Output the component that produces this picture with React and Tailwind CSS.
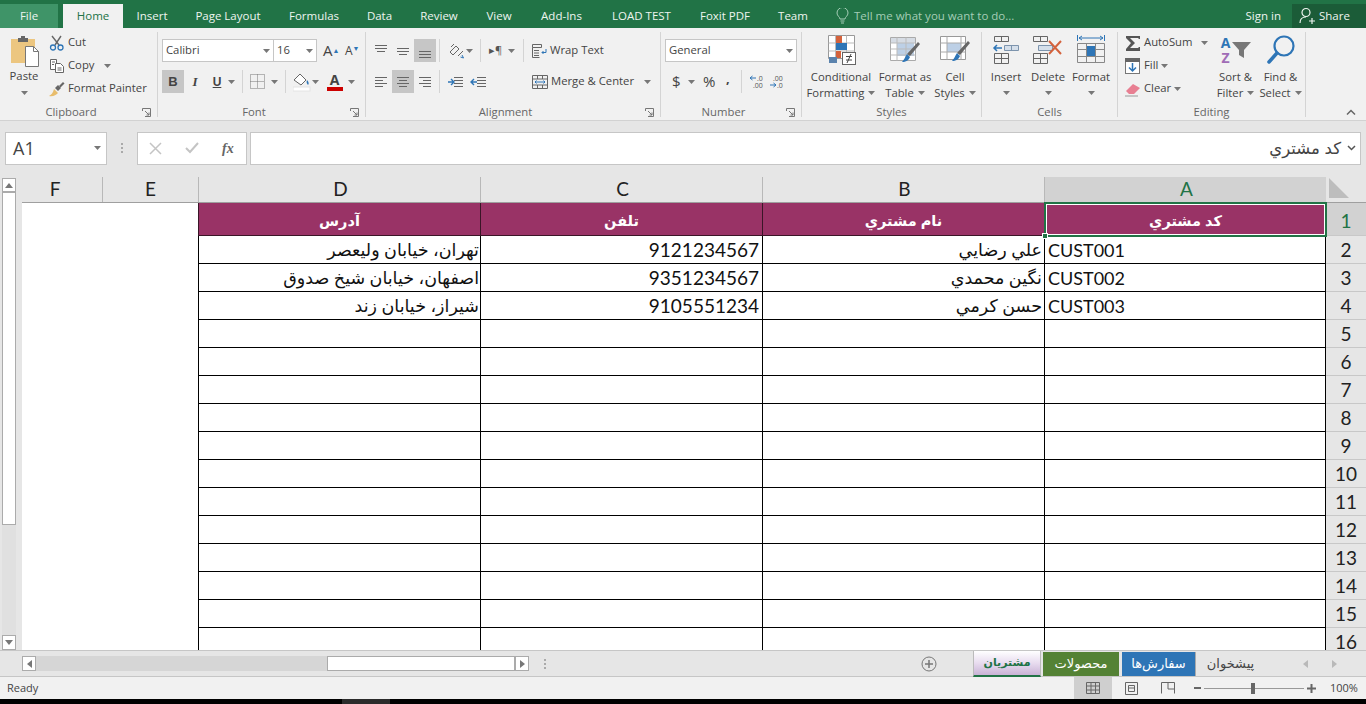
const Caret = ({ className = "" }) => (
    <svg className={`shrink-0 ${className}`} width="7" height="4" viewBox="0 0 7 4"><path d="M0 0h7L3.5 4z" fill="#777" /></svg>
)

const Sep = ({ className = "" }) => <div className={`w-px h-[23px] bg-[#d4d4d4] shrink-0 ${className}`} />

const Launcher = () => (
    <svg width="9" height="9" viewBox="0 0 9 9" fill="none" stroke="#777"><path d="M.5 3V.5h8v8H3" /><path d="M3 3l4 4M7 4.500V7H4.500" /></svg>
)

const Group = ({ label, launcher, className, children }) => (
    <div className={`h-[85px] mt-1 border-r border-[#d4d4d4] shrink-0 flex flex-col ${className}`}>
        <div className="flex-1 min-h-0">{children}</div>
        <div className="h-[18px] translate-y-[4px] flex items-center text-[#666]">
            <span className="flex-1 text-center">{label}</span>
            {launcher && <span className="flex mr-[6px]"><Launcher /></span>}
        </div>
    </div>
)

const PasteIcon = () => (
    <svg width="30" height="32" viewBox="0 0 30 32">
        <rect x="1" y="4" width="24" height="24" fill="#ecc680" />
        <path d="M8 3h3V1h4v2h3v4H8z" fill="#666" />
        <path d="M15.500 11.500h8l5 5v15h-13z" fill="#fff" stroke="#777" />
        <path d="M23.500 11.500v5h5" fill="none" stroke="#777" />
    </svg>
)

const CutIcon = () => (
    <svg width="16" height="16" viewBox="0 0 16 16" fill="none">
        <path d="M3 1l7 9M12 1L6 10" stroke="#666" strokeWidth="1.400" />
        <circle cx="4" cy="12.500" r="2.500" stroke="#2e75b6" strokeWidth="1.300" />
        <circle cx="11.500" cy="12.500" r="2.500" stroke="#2e75b6" strokeWidth="1.300" />
    </svg>
)

const CopyIcon = () => (
    <svg width="16" height="16" viewBox="0 0 16 16" fill="#fff" stroke="#666">
        <path d="M1.500 1.500h6v10h-6z" />
        <path d="M6.500 5.500h5l3 3v6h-8z" />
        <path d="M3 4h3M3 6.500h2M8.500 10h4M8.500 12h4" fill="none" />
    </svg>
)

const PainterIcon = () => (
    <svg width="16" height="16" viewBox="0 0 16 16">
        <path d="M0 15c2-1 4-3 5-7l4 4c-2 2-5 4-9 3z" fill="#e8bd6c" />
        <path d="M6 7l3-3 3 3-3 3z" fill="#666" />
        <path d="M10 5l4-4 1.500 1.500-4 4z" fill="#666" />
    </svg>
)

const Lines = ({ rows }) => (
    <svg width="16" height="16" viewBox="0 0 16 16" stroke="#666" fill="none">
        {rows.map((r, i) => <path key={i} d={`M${r[0]} ${r[2]}.500H${r[1]}`} />)}
    </svg>
)

const FillIcon = () => (
    <svg width="18" height="20" viewBox="0 0 18 20" fill="none">
        <path d="M1 8l6-6 6 6-5 5z" fill="#fff" stroke="#666" />
        <path d="M14 8c2 2 2 4 1 5-1-1-2-3-1-5z" fill="#2e75b6" />
        <rect x="0" y="15" width="17" height="4" fill="#fff" stroke="#e4e4e4" />
    </svg>
)

const AlignBtn = ({ rows, on }) => (
    <div className={`w-[22px] h-[23px] flex items-center justify-center ${on ? "bg-[#c6c6c6]" : ""}`}><Lines rows={rows} /></div>
)

const WrapIcon = () => (
    <svg width="16" height="16" viewBox="0 0 16 16" fill="none" stroke="#666">
        <path d="M1.500 1.500h9v3h-9zM1.500 4.500v10h7M3 7.500h5M3 10h5M3 12.500h5" />
        <path d="M15 6v3.500h-4M12.500 8L11 9.500l1.500 1.500" stroke="#2e75b6" />
    </svg>
)

const MergeIcon = () => (
    <svg width="16" height="16" viewBox="0 0 16 16" fill="none" stroke="#666">
        <path d="M.5 1.500h15v13H.5zM.5 5h15M.5 11h15M5.500 1.500V5M10.500 1.500V5M5.500 11v3.500M10.500 11v3.500" />
        <path d="M3 8h10M4.500 6.500L3 8l1.500 1.500M11.500 6.500L13 8l-1.500 1.500" stroke="#2e75b6" />
    </svg>
)

const CondIcon = () => (
    <svg width="32" height="32" viewBox="0 0 32 32">
        <path d="M3.500 1.500h26v23h-26z" fill="#fff" stroke="#999" />
        <path d="M3.500 9h26M3.500 17h26M10.500 1.500v23M21.500 1.500v23" stroke="#bbb" fill="none" />
        <rect x="11" y="2" width="6" height="7" fill="#d4623c" />
        <rect x="11" y="9" width="11" height="7" fill="#2e75b6" />
        <rect x="11" y="17" width="5" height="7" fill="#d4623c" />
        <rect x="4" y="23" width="8" height="6" fill="#5b83ad" />
        <rect x="17.500" y="18.500" width="13" height="12" fill="#fff" stroke="#666" />
        <path d="M21 22.500h6M21 26h6M22 29l4-9" stroke="#444" fill="none" />
    </svg>
)

const TableIcon = () => (
    <svg width="32" height="32" viewBox="0 0 32 32">
        <path d="M1.500 3.500h25v23h-25z" fill="#fff" stroke="#aaa" />
        <rect x="2" y="4" width="24" height="5" fill="#d6dce4" />
        <rect x="8" y="9" width="17" height="13" fill="#bdd0e6" />
        <path d="M1.500 9h25M1.500 15h25M1.500 21h25M8 3.500v23M17 3.500v23" stroke="#bbb" fill="none" />
        <path d="M29 8l2 2-10 12-3-2z" fill="#666" />
        <path d="M18 20l3 3c-1 3-4 5-8 5 2-2 3-5 5-8z" fill="#2e75b6" />
    </svg>
)

const CellStyleIcon = () => (
    <svg width="32" height="32" viewBox="0 0 32 32">
        <path d="M1.500 2.500h25v23h-25z" fill="#fff" stroke="#999" />
        <rect x="8" y="9" width="14" height="9" fill="#bdd0e6" />
        <path d="M8 2.500v23M22 2.500v23M1.500 9h25M1.500 18h25" stroke="#aaa" fill="none" />
        <path d="M29 7l2 2-10 12-3-2z" fill="#666" />
        <path d="M18 19l3 3c-1 3-4 5-8 5 2-2 3-5 5-8z" fill="#2e75b6" />
    </svg>
)

const InsertIcon = () => (
    <svg width="28" height="30" viewBox="0 0 28 30" fill="none" stroke="#666">
        <path d="M2.500 1.500h14v5h-14zM9.500 1.500v5M2.500 18.500h14v10h-14zM2.500 23.500h14M9.500 18.500v10" />
        <path d="M12.500 10.500h14v5h-14zM19.500 10.500v5" stroke="#7d94ad" fill="#d5dfea" />
        <path d="M10 13H2M5 10l-3 3 3 3" stroke="#2e75b6" strokeWidth="1.500" />
    </svg>
)

const DeleteIcon = () => (
    <svg width="32" height="30" viewBox="0 0 32 30" fill="none" stroke="#666">
        <path d="M1.500 1.500h14v5h-14zM8.500 1.500v5M1.500 18.500h14v10h-14zM1.500 23.500h14M8.500 18.500v10" />
        <path d="M6.500 10.500h14v5h-14z" stroke="#7d94ad" fill="#d5dfea" />
        <path d="M17 6l12 13M29 6L17 19" stroke="#d4623c" strokeWidth="2" />
    </svg>
)

const FormatIcon = () => (
    <svg width="30" height="32" viewBox="0 0 30 32" fill="none" stroke="#666">
        <path d="M1.500 1v6M28.500 1v6M3 4h24M3 4l3-2M3 4l3 2M27 4l-3-2M27 4l-3 2" stroke="#2e75b6" />
        <path d="M1.500 9.500h27v19h-27zM1.500 15.500h27M1.500 22.500h27M10.500 9.500v19M19.500 9.500v19" stroke="#888" />
        <rect x="11" y="12" width="8" height="10" fill="#2e75b6" stroke="none" />
    </svg>
)

const SumIcon = () => (
    <svg width="16" height="16" viewBox="0 0 16 16"><path d="M1 1h14v3h-1l-1-1H5l5 5-5 5h8l1-1h1v4H1v-2l5-6-5-5z" fill="#555" /></svg>
)

const FillDownIcon = () => (
    <svg width="16" height="16" viewBox="0 0 16 16">
        <rect x=".5" y=".5" width="14" height="15" fill="#fff" stroke="#777" />
        <rect x="0" y="0" width="15" height="4" fill="#666" />
        <path d="M7.500 5v8M4 9.500l3.500 3.500L11 9.500" fill="none" stroke="#2e75b6" strokeWidth="1.500" />
    </svg>
)

const EraserIcon = () => (
    <svg width="16" height="16" viewBox="0 0 16 16">
        <path d="M1 10l7-7 7 4-6 6H4z" fill="#e87f92" />
        <path d="M0 15h13" stroke="#999" strokeWidth="1" />
    </svg>
)

const SortIcon = () => (
    <div className="flex items-center h-[32px]">
        <div className="w-[12px] flex flex-col items-center font-bold text-[14px]">
            <span className="h-[15px] leading-[15px] text-[#2e75b6]">A</span>
            <span className="h-[15px] leading-[15px] text-[#a06cb6]">Z</span>
        </div>
        <svg width="20" height="18" viewBox="0 0 20 18"><path d="M0 1h19l-7 8v8l-5-3V9z" fill="#777" /></svg>
    </div>
)

const FindIcon = () => (
    <svg width="30" height="30" viewBox="0 0 30 30" fill="none" stroke="#2e75b6">
        <circle cx="18" cy="11" r="9.500" strokeWidth="2.200" />
        <path d="M11 18L3 27" strokeWidth="3.500" strokeLinecap="round" />
    </svg>
)

const BigBtn = ({ icon, lines, className }) => (
    <div className={`flex flex-col items-center shrink-0 leading-4 ${className}`}>
        <div className="h-[36px] flex items-center justify-center">{icon}</div>
        <div className="mt-[1px] text-center whitespace-nowrap">{lines[0]}</div>
        <div className="text-center whitespace-nowrap flex items-center justify-center h-[16px] gap-1">{lines[1]}<Caret /></div>
    </div>
)

const SmallBtn = ({ icon, label, caret, className = "" }) => (
    <div className={`h-[23px] flex items-center gap-[2px] whitespace-nowrap ${className}`}>
        <span className="w-[18px] flex justify-center shrink-0">{icon}</span>
        <span>{label}</span>
        {caret && <Caret className={caret} />}
    </div>
)

const Ribbon = () => (
    <div className="h-[93px] bg-[#f1f1f1] border-b border-[#d2d2d2] flex text-[11.3px] text-[#444] relative shrink-0">
        <Group label="Clipboard" launcher className="w-[158px]">
            <div className="flex">
                <div className="w-[48px] flex flex-col items-center">
                    <div className="h-[32px] mt-[3px] flex items-end pl-[2px]"><PasteIcon /></div>
                    <div className="mt-[1px] leading-4">Paste</div>
                    <Caret className="mt-[7px]" />
                </div>
                <div className="flex flex-col">
                    <SmallBtn icon={<CutIcon />} label="Cut" className="mt-[-1px]" />
                    <SmallBtn icon={<CopyIcon />} label="Copy" caret="ml-2" />
                    <SmallBtn icon={<PainterIcon />} label="Format Painter" />
                </div>
            </div>
        </Group>
        <Group label="Font" launcher className="w-[208px]">
            <div className="pl-[4px] pt-[7px] flex flex-col gap-[8px]">
                <div className="flex items-center h-[23px]">
                    <div className="w-[112px] h-[23px] bg-white border border-[#c6c6c6] flex items-center justify-between pl-[3px] pr-[3px]">Calibri<Caret /></div>
                    <div className="w-[43px] h-[23px] bg-white border border-l-0 border-[#c6c6c6] flex items-center justify-between pl-[3px] pr-[3px]">16<Caret /></div>
                    <span className="ml-[6px] text-[15px] w-[22px] leading-none">A<sup className="text-[7px] text-[#2e75b6]">▲</sup></span>
                    <span className="text-[12px] w-[16px] leading-none">A<sup className="text-[7px] text-[#2e75b6]">▼</sup></span>
                </div>
                <div className="flex items-center h-[23px]">
                    <div className="w-[22px] h-[23px] bg-[#c6c6c6] flex items-center justify-center font-bold font-['Liberation_Sans',sans-serif] text-[13px]">B</div>
                    <div className="w-[22px] text-center italic font-['Liberation_Serif',serif] text-[13px] font-bold">I</div>
                    <div className="w-[22px] text-center underline font-bold font-['Liberation_Sans',sans-serif] text-[12px]">U</div>
                    <Caret />
                    <Sep className="ml-[7px]" />
                    <svg className="ml-[7px]" width="16" height="16" viewBox="0 0 16 16" fill="none" stroke="#777" strokeDasharray="1 1"><path d="M.5.500h14v14H.5zM7.500.500v14M.5 7.500h14" /></svg>
                    <Caret className="ml-[5px]" />
                    <Sep className="ml-[7px]" />
                    <span className="ml-[7px] flex"><FillIcon /></span>
                    <Caret className="ml-[1px]" />
                    <div className="ml-[7px] w-[17px] flex flex-col items-center leading-none font-bold text-[14px]">A<div className="w-[16px] h-[4px] bg-[#c00]" /></div>
                    <Caret className="ml-[5px]" />
                </div>
            </div>
        </Group>
        <Group label="Alignment" launcher className="w-[295px]">
            <div className="pl-[4px] pt-[7px] flex flex-col gap-[8px]">
                <div className="flex items-center h-[23px]">
                    <AlignBtn rows={[[2, 14, 2], [2, 14, 5], [4, 12, 8]]} />
                    <AlignBtn rows={[[2, 14, 5], [2, 14, 8], [4, 12, 11]]} />
                    <AlignBtn on rows={[[2, 14, 8], [2, 14, 11], [2, 14, 14]]} />
                    <Sep className="ml-[3px]" />
                    <svg className="ml-[8px]" width="16" height="16" viewBox="0 0 16 16" fill="none" stroke="#666"><path d="M2 9l6-6 3 3-6 6zM3 4l3-3M10 13l5-5" /><path d="M14 12l1.500 3-3-1" stroke="#2e75b6" /></svg>
                    <Caret className="ml-[2px]" />
                    <Sep className="ml-[7px]" />
                    <span className="ml-[8px] text-[11px] text-[#555] w-[13px]">▸¶</span>
                    <Caret className="ml-[6px]" />
                    <Sep className="ml-[8px]" />
                    <SmallBtn icon={<WrapIcon />} label="Wrap Text" className="ml-[6px]" />
                </div>
                <div className="flex items-center h-[23px]">
                    <AlignBtn rows={[[2, 14, 3], [2, 10, 6], [2, 14, 9], [2, 10, 12]]} />
                    <AlignBtn on rows={[[2, 14, 3], [4, 12, 6], [2, 14, 9], [4, 12, 12]]} />
                    <AlignBtn rows={[[2, 14, 3], [6, 14, 6], [2, 14, 9], [6, 14, 12]]} />
                    <Sep className="ml-[3px]" />
                    <svg className="ml-[7px]" width="17" height="16" viewBox="0 0 17 16" fill="none" stroke="#666"><path d="M7 3.500h9M7 6.500h9M7 9.500h9M7 12.500h9" /><path d="M1 8h5M4 5l3 3-3 3" stroke="#2e75b6" strokeWidth="1.400" /></svg>
                    <svg className="ml-[6px]" width="17" height="16" viewBox="0 0 17 16" fill="none" stroke="#666"><path d="M7 3.500h9M7 6.500h9M7 9.500h9M7 12.500h9" /><path d="M7 8H1M4 5L1 8l3 3" stroke="#2e75b6" strokeWidth="1.400" /></svg>
                    <SmallBtn icon={<MergeIcon />} label="Merge & Center" caret="ml-[8px]" className="ml-[44px]" />
                </div>
            </div>
        </Group>
        <Group label="Number" launcher className="w-[141px]">
            <div className="pl-[4px] pt-[7px] flex flex-col gap-[8px]">
                <div className="w-[132px] h-[23px] bg-white border border-[#c6c6c6] flex items-center justify-between pl-[3px] pr-[3px]">General<Caret /></div>
                <div className="flex items-center h-[23px]">
                    <span className="ml-[7px] w-[11px] text-[15px]">$</span>
                    <Caret className="ml-[5px]" />
                    <span className="ml-[8px] w-[16px] text-[15px]">%</span>
                    <span className="ml-[7px] w-[6px] font-bold text-[13px] -translate-y-[3px]">,</span>
                    <Sep className="ml-[9px]" />
                    <svg className="ml-[7px]" width="16" height="16" viewBox="0 0 16 16" fill="none"><path d="M7 4H1M3.500 2L1 4l2.500 2" stroke="#2e75b6" /><text x="8" y="7" fontSize="7" fill="#555">.0</text><text x="4" y="14" fontSize="7" fill="#555">.00</text></svg>
                    <svg className="ml-[4px]" width="16" height="16" viewBox="0 0 16 16" fill="none"><text x="4" y="7" fontSize="7" fill="#555">.00</text><path d="M1 11h6M4.500 9L7 11l-2.500 2" stroke="#2e75b6" /><text x="8" y="14" fontSize="7" fill="#555">.0</text></svg>
                </div>
            </div>
        </Group>
        <Group label="Styles" className="w-[180px]">
            <div className="flex pl-[3px]">
                <BigBtn icon={<CondIcon />} lines={["Conditional", "Formatting"]} className="w-[72px]" />
                <BigBtn icon={<TableIcon />} lines={["Format as", "Table"]} className="w-[56px]" />
                <BigBtn icon={<CellStyleIcon />} lines={["Cell", "Styles"]} className="w-[44px]" />
            </div>
        </Group>
        <Group label="Cells" className="w-[136px]">
            <div className="flex pl-[4px]">
                <BigBtn icon={<InsertIcon />} lines={["Insert", ""]} className="w-[40px]" />
                <BigBtn icon={<DeleteIcon />} lines={["Delete", ""]} className="w-[44px]" />
                <BigBtn icon={<FormatIcon />} lines={["Format", ""]} className="w-[42px]" />
            </div>
        </Group>
        <Group label="Editing" className="w-[188px]">
            <div className="flex pl-[6px]">
                <div className="flex flex-col mt-[-1px] w-[89px]">
                    <SmallBtn icon={<SumIcon />} label="AutoSum" caret="ml-[7px]" />
                    <SmallBtn icon={<FillDownIcon />} label="Fill" caret="ml-[1px]" />
                    <SmallBtn icon={<EraserIcon />} label="Clear" caret="ml-[1px]" />
                </div>
                <BigBtn icon={<SortIcon />} lines={["Sort &", "Filter"]} className="w-[45px]" />
                <BigBtn icon={<FindIcon />} lines={["Find &", "Select"]} className="w-[45px]" />
            </div>
        </Group>
        <div className="flex-1 flex items-end justify-end pb-[5px] pr-[10px]">
            <svg width="10" height="6" viewBox="0 0 10 6" fill="none" stroke="#666" strokeWidth="1.500"><path d="M1 5.500l4-4 4 4" /></svg>
        </div>
    </div>
)

const tabs = [
    { name: "Insert", w: "w-[58px]" },
    { name: "Page Layout", w: "w-[94px]" },
    { name: "Formulas", w: "w-[78px]" },
    { name: "Data", w: "w-[53px]" },
    { name: "Review", w: "w-[66px]" },
    { name: "View", w: "w-[54px]" },
    { name: "Add-Ins", w: "w-[71px]" },
    { name: "LOAD TEST", w: "w-[89px]" },
    { name: "Foxit PDF", w: "w-[78px]" },
    { name: "Team", w: "w-[58px]" },
]

const TitleTabs = () => (
    <div className="h-[28px] bg-[#217346] flex items-end text-[11.5px] text-[#eef5f0] shrink-0">
        <div className="w-[58px] h-[24px] pb-[1px] bg-[#3f9468] flex items-center justify-center">File</div>
        <div className="ml-[5px] w-[60px] h-[24px] pb-[1px] bg-[#f1f1f1] text-[#217346] flex items-center justify-center">Home</div>
        {tabs.map((t) => (
            <div key={t.name} className={`${t.w} h-[24px] pb-[1px] flex items-center justify-center whitespace-nowrap`}>{t.name}</div>
        ))}
        <div className="ml-[14px] h-[24px] pb-[1px] flex items-center gap-[5px] text-[#a5cdb6]">
            <svg width="13" height="16" viewBox="0 0 13 16" fill="none" stroke="#a5cdb6"><path d="M4 11c0-2-3-3-3-6a5.500 5.500 0 0 1 11 0c0 3-3 4-3 6zM4.500 13h4M5 15h3" /></svg>
            <span className="whitespace-nowrap">Tell me what you want to do...</span>
        </div>
        <div className="flex-1" />
        <div className="h-[24px] pb-[1px] flex items-center mr-[11px]">Sign in</div>
        <div className="w-[74px] h-[24px] pb-[1px] bg-[#1b5c38] flex items-center gap-[4px] pl-[7px]">
            <svg width="16" height="17" viewBox="0 0 16 17" fill="none" stroke="#eef5f0" strokeWidth="1.200"><circle cx="7" cy="5.500" r="4" /><path d="M1 16c0-4 2-6 6-6M10 14h6M13 11v6" /></svg>
            Share
        </div>
    </div>
)

const FormulaBar = () => (
    <div className="h-[56px] bg-[#e6e6e6] flex items-center pl-[5px] pr-[5px] pb-[2px] shrink-0">
        <div className="w-[102px] h-[33px] bg-white border border-[#c6c6c6] flex items-center justify-between pl-[7px] pr-[5px] text-[18px] text-[#444]">
            A1<Caret />
        </div>
        <div className="w-[30px] flex flex-col items-center gap-[2px]">
            <i className="w-[2px] h-[2px] bg-[#aaa]" /><i className="w-[2px] h-[2px] bg-[#aaa]" /><i className="w-[2px] h-[2px] bg-[#aaa]" />
        </div>
        <div className="w-[110px] h-[33px] bg-white border border-[#c6c6c6] flex items-center text-[#bbb]">
            <svg className="ml-[11px]" width="13" height="13" viewBox="0 0 13 13" fill="none" stroke="#c4c4c4" strokeWidth="1.500"><path d="M1 1l11 11M12 1L1 12" /></svg>
            <svg className="ml-[23px]" width="14" height="12" viewBox="0 0 14 12" fill="none" stroke="#c4c4c4" strokeWidth="2"><path d="M1 6l4 4 8-9" /></svg>
            <span className="ml-[23px] text-[#666] italic font-['Liberation_Serif',serif] text-[14px] font-bold">fx</span>
        </div>
        <div className="ml-[3px] flex-1 h-[33px] bg-white border border-[#c6c6c6] flex items-center justify-end pr-[4px] gap-[6px] font-['Liberation_Sans','DejaVu_Sans',sans-serif] text-[16.5px] text-[#444]">
            <span dir="rtl" className="whitespace-nowrap">كد مشتري</span>
            <svg width="9" height="6" viewBox="0 0 9 6" fill="none" stroke="#555" strokeWidth="1.500"><path d="M1 1l3.500 3.500L8 1" /></svg>
        </div>
    </div>
)

const Arrow = ({ dir }) => {
    const paths = { up: "M0 5l4-5 4 5z", down: "M0 0l4 5 4-5z", left: "M5 0L0 4l5 4z", right: "M0 0l5 4-5 4z" }
    const flat = dir === "up" || dir === "down"
    return <svg width={flat ? 8 : 5} height={flat ? 5 : 8} viewBox={flat ? "0 0 8 5" : "0 0 5 8"}><path d={paths[dir]} fill="#777" /></svg>
}

const VScroll = () => (
    <div className="w-[22px] bg-[#e6e6e6] flex flex-col items-center pr-[4px] pt-[1px] shrink-0">
        <div className="w-[14px] h-[14px] bg-white border border-[#ababab] flex items-center justify-center"><Arrow dir="up" /></div>
        <div className="w-[14px] h-[333px] bg-white border border-[#ababab]" />
        <div className="w-[14px] flex-1 bg-[#e0e0e0]" />
        <div className="w-[14px] h-[15px] bg-white border border-[#ababab] flex items-center justify-center"><Arrow dir="down" /></div>
    </div>
)

const customers = [
    { a: "CUST001", b: "علي رضايي", c: "9121234567", d: "تهران، خيابان وليعصر" },
    { a: "CUST002", b: "نگين محمدي", c: "9351234567", d: "اصفهان، خيابان شيخ صدوق" },
    { a: "CUST003", b: "حسن كرمي", c: "9105551234", d: "شيراز، خيابان زند" },
]

const emptyRows = [5, 6, 7, 8, 9, 10, 11, 12, 13, 14, 15, 16]

const cellFont = "font-['Lato','DejaVu_Sans',sans-serif] text-[19px] text-[#111]"

const Cell = ({ className = "", children }) => (
    <div className={`w-[282px] h-full pt-[2px] bg-white border-l border-b border-black flex items-center whitespace-nowrap overflow-hidden ${className}`}>{children}</div>
)

const HeadCol = ({ className = "", w, active, children }) => (
    <div className={`${w} h-full flex items-center justify-center border-l border-[#b8b8b8] ${active ? "bg-[#d2d2d2] text-[#217346]" : "text-[#222]"} ${className}`}>{children}</div>
)

const RowNum = ({ active, className = "", children }) => (
    <div className={`w-[40px] h-full flex items-center justify-center border-b border-[#c8c8c8] ${active ? "bg-[#d2d2d2] text-[#217346]" : "bg-[#e6e6e6] text-[#222]"} ${className}`}>{children}</div>
)

const Row = ({ num, a, b, c, d }) => (
    <div className={`h-[28px] flex ${cellFont}`}>
        <div className="w-[176px] bg-white" />
        <Cell className="justify-end pr-[1px] text-[17.5px]"><span dir="rtl">{d}</span></Cell>
        <Cell className="justify-end pr-[3px]">{c}</Cell>
        <Cell className="justify-end pr-[2px] text-[17.5px]"><span dir="rtl">{b}</span></Cell>
        <Cell className="pl-[3px] border-r text-[18px]">{a}</Cell>
        <RowNum className="pt-[2px]">{num}</RowNum>
    </div>
)

const Sheet = () => (
    <div className="flex-1 h-full overflow-hidden relative">
        <div className={`h-[26px] flex bg-[#e6e6e6] border-b border-[#9f9f9f] ${cellFont}`}>
            <HeadCol w="w-[80px] border-l-0" className="pr-[14px]">F</HeadCol>
            <HeadCol w="w-[96px]">E</HeadCol>
            <HeadCol w="w-[282px]" className="pl-[2px]">D</HeadCol>
            <HeadCol w="w-[282px]" className="pl-[2px]">C</HeadCol>
            <HeadCol w="w-[282px]" className="pl-[2px]">B</HeadCol>
            <HeadCol w="w-[282px]" className="pl-[2px]" active>A</HeadCol>
            <div className="w-[40px] flex pl-[3px] pb-[4px] pt-[1px]">
                <svg width="20" height="20" viewBox="0 0 20 20"><path d="M0 0l20 20H0z" fill="#bdbdbd" /></svg>
            </div>
        </div>
        <div className={`h-[33px] flex ${cellFont}`}>
            <div className="w-[176px] bg-white" />
            {["آدرس", "تلفن", "نام مشتري", "كد مشتري"].map((h) => (
                <div key={h} dir="rtl" className="w-[282px] h-full pt-[5px] bg-[#993366] border-l border-b border-[#3a1527] flex items-center justify-center text-white font-bold text-[14.5px] font-['Liberation_Sans','DejaVu_Sans',sans-serif]">{h}</div>
            ))}
            <RowNum active className="pt-[5px]">1</RowNum>
        </div>
        {customers.map((r, i) => <Row key={r.a} num={i + 2} {...r} />)}
        {emptyRows.map((n) => <Row key={n} num={n} a="" b="" c="" d="" />)}
        {/* selection box on A1 */}
        <div className="absolute left-[1022px] top-[25px] w-[283px] h-[35px] border-2 border-[#217346] pointer-events-none">
            <div className="h-full border border-white" />
            <div className="absolute left-[-4px] bottom-[-4px] w-[6px] h-[6px] bg-[#217346] border border-white" />
        </div>
    </div>
)

const SheetTab = ({ className, children }) => (
    <div dir="rtl" className={`h-[24px] flex items-center justify-center whitespace-nowrap font-['Liberation_Sans','DejaVu_Sans',sans-serif] ${className}`}>{children}</div>
)

const TabsBar = () => (
    <div className="h-[27px] bg-[#e6e6e6] border-t border-[#c6c6c6] border-b flex items-center text-[#444] shrink-0 pl-[22px]">
        <div className="w-[14px] h-[15px] bg-white border border-[#ababab] flex items-center justify-center"><Arrow dir="left" /></div>
        <div className="w-[291px] h-[15px] bg-[#d6d6d6]" />
        <div className="w-[188px] h-[15px] bg-white border border-[#ababab]" />
        <div className="w-[14px] h-[15px] bg-white border border-[#ababab] flex items-center justify-center"><Arrow dir="right" /></div>
        <div className="ml-[15px] flex flex-col gap-[2px]">
            <i className="w-[2px] h-[2px] bg-[#aaa]" /><i className="w-[2px] h-[2px] bg-[#aaa]" /><i className="w-[2px] h-[2px] bg-[#aaa]" />
        </div>
        <div className="flex-1" />
        <svg width="16" height="16" viewBox="0 0 16 16" fill="none" stroke="#777" className="mr-[36px]"><circle cx="8" cy="8" r="7" /><path d="M4 8h8M8 4v8" strokeWidth="1.500" /></svg>
        <SheetTab className="w-[68px] h-[26px] bg-gradient-to-b from-white via-[#e8dcef] to-[#c9b3d6] border-l border-r border-b-2 border-b-[#217346] border-[#bbb] text-[#217346] font-bold text-[11px]">مشتريان</SheetTab>
        <SheetTab className="ml-[2px] w-[76px] bg-[#548235] text-white text-[13px]">محصولات</SheetTab>
        <SheetTab className="ml-[3px] w-[73px] bg-[#2e75b6] text-white text-[13px]">سفارش‌ها</SheetTab>
        <SheetTab className="w-[70px] border-l border-[#aaa] text-[#444] text-[13px]">پيشخوان</SheetTab>
        <div className="w-[101px] flex items-center pl-[38px] gap-[24px] opacity-40"><Arrow dir="left" /><Arrow dir="right" /></div>
    </div>
)

const StatusBar = () => (
    <div className="h-[22px] bg-[#f1f1f1] flex items-center text-[11px] text-[#444] shrink-0 pl-[7px]">
        <span>Ready</span>
        <div className="flex-1" />
        <div className="w-[38px] h-[22px] bg-[#cfcfcf] flex items-center justify-center">
            <svg width="14" height="12" viewBox="0 0 14 12" fill="none" stroke="#666"><path d="M.5.500h13v11H.5zM.5 4h13M.5 8h13M5 .500v11M9.500 .500v11" /></svg>
        </div>
        <svg className="ml-[13px]" width="13" height="13" viewBox="0 0 13 13" fill="none" stroke="#666"><path d="M.5.500h12v12H.5zM3.500 3.500h6v6h-6zM4 6h5" /></svg>
        <svg className="ml-[23px]" width="14" height="12" viewBox="0 0 14 12" fill="none" stroke="#666"><path d="M.5 11.500v-11h13v11M7 .500V7h6" /></svg>
        <div className="ml-[19px] w-[7px] h-[2px] bg-[#666]" />
        <div className="ml-[3px] w-[100px] h-[1px] bg-[#999] flex items-center pl-[47px]"><div className="w-[4px] h-[11px] bg-[#666]" /></div>
        <svg className="ml-[3px]" width="9" height="9" viewBox="0 0 9 9" stroke="#666" strokeWidth="2"><path d="M0 4.500h9M4.500 0v9" /></svg>
        <span className="ml-[14px] mr-[9px] w-[27px] text-right">100%</span>
    </div>
)

export default function App() {
    return (
        <div className="w-[1366px] h-[704px] overflow-hidden flex flex-col bg-black font-['Open_Sans','Liberation_Sans',sans-serif]">
            <TitleTabs />
            <Ribbon />
            <FormulaBar />
            <div className="h-[473px] flex shrink-0">
                <VScroll />
                <Sheet />
            </div>
            <TabsBar />
            <StatusBar />
            <div className="h-[5px] bg-black flex pl-[342px]"><div className="w-[48px] bg-[#2b2b2b]" /></div>
        </div>
    )
}
